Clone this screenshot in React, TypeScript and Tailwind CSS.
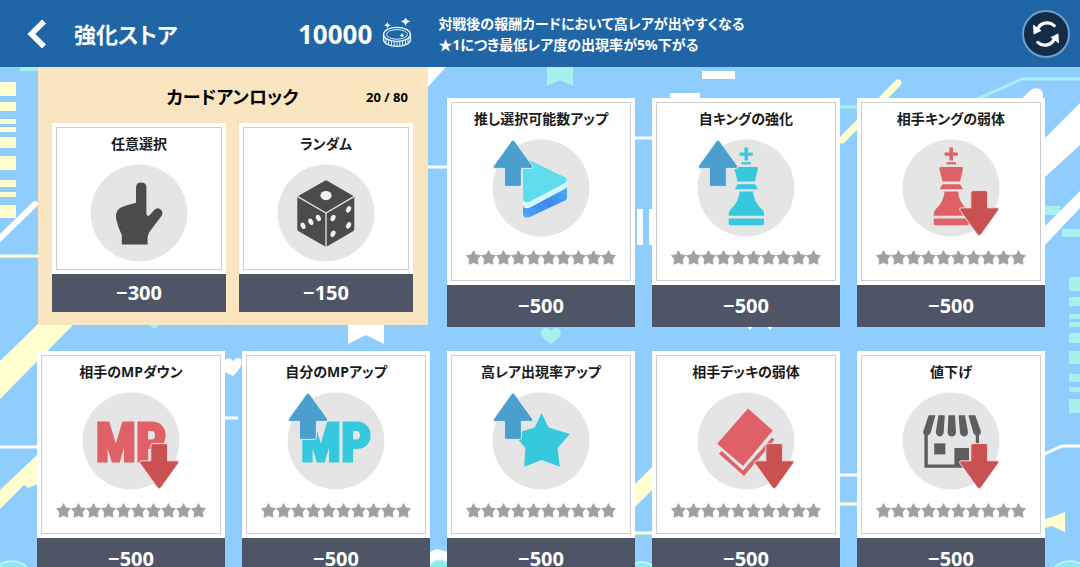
import type { ReactNode } from 'react';

const BLUE = '#36c9de';
const RED = '#df6167';

function UpArrow() {
  return (
    <path
      d="M18.4 1.2Q20 -1 21.6 1.2L39.6 26Q40.4 28.4 38 28.4H28.4V44.5Q28.4 46.4 26.4 46.4H13.4Q11.4 46.4 11.4 44.5V28.4H2Q-0.4 28.4 0.6 26Z"
      fill="#4b9fcd"
      stroke="#dcedf6"
      strokeWidth="1"
    />
  );
}

function DownArrow() {
  return (
    <path
      d="M70 50.6H82.4Q84.6 50.6 84.6 52.6V67.8H94.4Q96.8 68.2 95.2 70.4L78 94.6Q76.2 96.6 74.4 94.6L57 70.4Q55.6 68 58 67.8H67.8V52.6Q67.8 50.6 70 50.6Z"
      fill="#c95152"
      stroke="#f3dcdc"
      strokeWidth="1"
    />
  );
}

function King({ color }: { color: string }) {
  return (
    <g fill={color}>
      <path d="M46.4 7.5h3.6v5h4.8v3.2H50v4.8h-3.6v-4.8h-4.8v-3.2h4.8z" />
      <path d="M43.4 22.2h9.6v2.2h-9.6z" />
      <path d="M37.4 27H58.9Q60.4 27 60 28.6L57 41.4H39.5L36.3 28.6Q36 27 37.4 27Z" />
      <path d="M39.6 44.2H57L60 49.2H36.6Z" />
      <path d="M41.6 51.4H55Q56 62 63.6 69Q66 71.2 66 73.6V75.8H30.7V73.6Q30.7 71.2 33 69Q40.6 62 41.6 51.4Z" />
      <path d="M30.7 78.6H66V83.6Q66 85.2 64.4 85.2H32.3Q30.7 85.2 30.7 83.6Z" />
    </g>
  );
}

function MpText({ color }: { color: string }) {
  return (
    <text
      x="48"
      y="68"
      textAnchor="middle"
      fill={color}
      stroke={color}
      strokeWidth="3"
      className="font-['Impact','Roboto_Condensed','Open_Sans_Condensed','Liberation_Sans',sans-serif] text-[53px] font-bold"
    >
      MP
    </text>
  );
}

function Hand() {
  return (
    <path
      d="M45 23Q45 17.6 50.2 17.6T55.4 23V49.6Q56.4 51.6 58.6 50.2L63.4 44.8Q66.4 42 69.6 44.4Q72.4 47 70.8 50.6L58 67.6L56.6 72V79.4H30.8V70Q26 60 25 52.6Q24.6 46.6 28.4 43.6Q31 41.4 45 37.8Z"
      fill="#4b4b4b"
    />
  );
}

function Dice() {
  return (
    <g>
      <path
        d="M45.6 16.4Q48 14.8 50.4 16.4L76.3 31.4V63.4Q76.3 65.6 74.6 66.6L48 82L21 66.6Q19.3 65.6 19.3 63.4V31.4Z"
        fill="#4b4b4b"
      />
      <path d="M19.3 31.4L48 48L76.3 31.4M48 48V82" stroke="#e5e5e5" strokeWidth="1.3" fill="none" />
      <g fill="#f1f1f1">
        <ellipse cx="48" cy="30.6" rx="5.6" ry="4.6" />
        <ellipse cx="25" cy="60.8" rx="2.3" ry="3.4" transform="rotate(-25 25 60.8)" />
        <ellipse cx="32.8" cy="56.8" rx="2.3" ry="3.4" transform="rotate(-25 32.8 56.8)" />
        <ellipse cx="40.4" cy="53" rx="2.3" ry="3.4" transform="rotate(-25 40.4 53)" />
        <ellipse cx="55" cy="53" rx="2.3" ry="3.4" transform="rotate(25 55 53)" />
        <ellipse cx="70.6" cy="44.4" rx="2.3" ry="3.4" transform="rotate(25 70.6 44.4)" />
        <ellipse cx="70.6" cy="60.4" rx="2.3" ry="3.4" transform="rotate(25 70.6 60.4)" />
        <ellipse cx="55" cy="68.8" rx="2.3" ry="3.4" transform="rotate(25 55 68.8)" />
      </g>
    </g>
  );
}

function PlayTile() {
  return (
    <g>
      <defs>
        <linearGradient id="tile" x1="0" y1="1" x2="1" y2="0">
          <stop offset="0" stopColor="#4ea6f8" />
          <stop offset="0.5" stopColor="#3f86ef" />
          <stop offset="1" stopColor="#4fb4f6" />
        </linearGradient>
      </defs>
      <path d="M30 62L74 43V57.5Q74 59.6 72 60.6L38 76.6Q30 79.6 30 73.6Z" fill="url(#tile)" />
      <path d="M30 57L74 38V46Q73.8 48 72 48.8L38 67Q30 70.4 30 64Z" fill="#d6fbff" />
      <path d="M30 21Q31 17.6 35 19.6L72.4 37.6Q75.6 40 72 43L37 61.4Q30.6 64 30 58.4Z" fill="#5fdcee" />
    </g>
  );
}

function BigStar() {
  return (
    <path
      d="M48.6 20.3L55.6 34.4L76.8 41L64.6 55L66.8 73.8L48.6 67L31.2 73.8L32.4 55L20.4 41L41.6 34.4Z"
      fill={BLUE}
    />
  );
}

function Deck() {
  return (
    <g fill={RED}>
      <path d="M50 15.6L74.8 37.4L45 73L19.2 50.8Z" />
      <path d="M23.8 58L45 77.6L73.8 44.8L76.6 46.6L46 83L20.8 60.4Z" />
    </g>
  );
}

function Shop() {
  return (
    <g fill="#5e5e5e">
      <path d="M25.6 22.2H32.4L27.6 40Q25.6 43.4 22.6 42.6Q19.4 41 20.4 38Z" />
      <path d="M35.4 22.2H41.8L40.6 40Q39.6 43.4 36.6 43.4T32.8 39Z" />
      <path d="M45.4 22.2H52L53 39.4Q52.4 43.4 48.8 43.4T44.6 39.4Z" />
      <path d="M55.6 22.2H62L65 39Q64.8 43.4 61.4 43.4T57 40Z" />
      <path d="M65.4 22.2H72.2L77.8 38Q78.4 41 75.4 42.6Q72 43.4 70.4 40Z" />
      <path d="M21.4 41H24.8V71.6H72.8V41H76V74.8H21.4Z" />
      <path d="M31.2 50.4H42.4V61.4H31.2Z" />
      <path d="M51.4 55H66V72H51.4Z" />
    </g>
  );
}

function Stars({ total = 10 }: { total?: number }) {
  return (
    <div className="mt-[14px] flex justify-center">
      {Array.from({ length: total }, (_, i) => (
        <svg key={i} viewBox="0 0 15 15" className="h-[15px] w-[15px]">
          <path
            d="M7.5 0.6L9.6 4.8L14.5 5.5L11.5 9.1L12 14.2L7.5 12.6L3 14.2L3.5 9.1L0.5 5.5L5.4 4.8Z"
            fill="#a0a0a0"
            stroke="#a0a0a0"
            strokeWidth="0.8"
            strokeLinejoin="round"
          />
        </svg>
      ))}
    </div>
  );
}

type CardProps = {
  title: string;
  price: number;
  icon: ReactNode;
  rated?: boolean;
};

function StoreCard({ title, price, icon, rated = false }: CardProps) {
  return (
    <button type="button" className="block w-full cursor-pointer text-center">
      <div className="bg-white p-1">
        <div className={`border border-[#cfcfcf] pt-1.5 ${rated ? 'pb-[15px]' : 'pb-2'}`}>
          <div className="text-[14px] leading-5 font-bold text-[#1b1b1b]">{title}</div>
          <svg viewBox="0 0 96 96" className="mx-auto mt-[11px] h-24 w-24 overflow-visible" aria-hidden="true">
            <circle cx="48" cy="48" r="48.4" fill="#e5e5e5" />
            {icon}
          </svg>
          {rated && <Stars />}
        </div>
      </div>
      <div className={`bg-[#4d5566] text-[20px] font-bold text-white ${rated ? 'leading-[42px]' : 'leading-[38px]'}`}>
        −{price}
      </div>
    </button>
  );
}

const firstRow: CardProps[] = [
  { title: '推し選択可能数アップ', price: 500, icon: <><PlayTile /><UpArrow /></> },
  { title: '自キングの強化', price: 500, icon: <><King color={BLUE} /><UpArrow /></> },
  { title: '相手キングの弱体', price: 500, icon: <><King color={RED} /><DownArrow /></> },
];

const secondRow: CardProps[] = [
  { title: '相手のMPダウン', price: 500, icon: <><MpText color={RED} /><DownArrow /></> },
  { title: '自分のMPアップ', price: 500, icon: <><MpText color={BLUE} /><UpArrow /></> },
  { title: '高レア出現率アップ', price: 500, icon: <><BigStar /><UpArrow /></> },
  { title: '相手デッキの弱体', price: 500, icon: <><Deck /><DownArrow /></> },
  { title: '値下げ', price: 500, icon: <><Shop /><DownArrow /></> },
];

function CoinIcon() {
  return (
    <svg viewBox="0 0 30 32" className="h-8 w-[30px]" fill="none" stroke="#e4f6ff" aria-hidden="true">
      <ellipse cx="15" cy="16.4" rx="13.4" ry="7" strokeWidth="1.4" />
      <ellipse cx="15" cy="16.4" rx="10.4" ry="4.8" strokeWidth="0.9" />
      <path d="M1.6 16.4V21.4C1.6 25.4 7.6 28.4 15 28.4S28.4 25.4 28.4 21.4V16.4" strokeWidth="1.4" />
      <path
        d="M4 20.6V25M6.6 22.2V26.8M9.4 23V27.8M12.2 23.4V28.2M15 23.6V28.2M17.8 23.4V28.2M20.6 23V27.8M23.4 22.2V26.8M26 20.6V25"
        strokeWidth="1"
      />
      <g fill="#e4f6ff" stroke="none">
        <path d="M23.6 -1.4Q24.2 2.8 28.4 3.6Q24.2 4.4 23.6 8.6Q23 4.4 18.8 3.6Q23 2.8 23.6 -1.4Z" />
        <path d="M5.4 4Q5.8 6.8 8.6 7.2Q5.8 7.6 5.4 10.4Q5 7.6 2.2 7.2Q5 6.8 5.4 4Z" />
        <path d="M20 15Q20.4 17 22.6 17.4Q20.4 17.8 20 19.8Q19.6 17.8 17.4 17.4Q19.6 17 20 15Z" />
      </g>
    </svg>
  );
}

function Header() {
  return (
    <header className="relative flex h-[67px] shrink-0 items-center bg-[#2066a6] pr-[10px] pl-[27px] text-white">
      <button type="button" aria-label="戻る" className="mr-[27px] cursor-pointer">
        <svg viewBox="0 0 20 30" className="h-[30px] w-5">
          <path d="M17 2.6L4.4 15L17 27.4" fill="none" stroke="#fff" strokeWidth="5.6" />
        </svg>
      </button>
      <h1 className="w-[224px] text-[22px] leading-8 font-bold">強化ストア</h1>
      <div className="mr-[26px] flex items-center gap-[10px]">
        <span className="text-[26px] leading-8 font-bold">10000</span>
        <CoinIcon />
      </div>
      <p className="text-[14px] leading-[21px] font-bold">
        対戦後の報酬カードにおいて高レアが出やすくなる
        <br />
        ★1につき最低レア度の出現率が5%下がる
      </p>
      <button
        type="button"
        aria-label="更新"
        className="ml-auto flex h-12 w-12 cursor-pointer items-center justify-center rounded-full border-2 border-[#6f9fcf] bg-[#132d49]"
      >
        <svg viewBox="0 0 30 30" className="h-[30px] w-[30px]">
          <g fill="none" stroke="#fff" strokeWidth="3.2" strokeLinecap="round">
            <path d="M6.4 10.6A10.4 10.4 0 0 1 23.2 6.6" />
            <path d="M23.6 19.4A10.4 10.4 0 0 1 6.8 23.4" />
          </g>
          <path d="M2 5.6L2.6 15.4L10.6 11.8Z" fill="#fff" />
          <path d="M28 24.4L27.4 14.6L19.4 18.2Z" fill="#fff" />
        </svg>
      </button>
    </header>
  );
}

// [y, height]
const yellowBars = [[82, 14], [102, 9], [119, 5], [127, 5], [137, 11], [156, 14], [180, 7], [192, 5], [205, 13]];
const mintBars = [[277, 14], [297, 9], [314, 5], [322, 5], [333, 10], [351, 13], [374, 8], [387, 5], [399, 14]];

function Backdrop() {
  return (
    <svg
      viewBox="0 0 1080 567"
      preserveAspectRatio="xMidYMid slice"
      className="absolute inset-0 h-full w-full"
      aria-hidden="true"
    >
      <g fill="#ffffcf">
        {yellowBars.map(([y, h]) => <rect key={y} x="0" y={y} width="16" height={h} />)}
        <path d="M38 324H74L0 399V361Z" />
        <path d="M38 454V484L28 488L24 485L0 509V490Z" />
        <path d="M630 489L660 459V482L630 512Z" />
        <path d="M1045 519L1052 517L1065 512V532L1052 526L1045 528Z" />
      </g>
      <g fill="#a8f0ec">
        {mintBars.map(([y, h]) => <rect key={y} x="1069" y={y} width="11" height={h} />)}
        <path d="M20 60H38V71H20Z" />
        <path d="M547 60H573V86L560 80L547 86Z" />
        <path d="M1044 206H1060V215H1044Z" />
        <path d="M1062 229H1080V237H1062Z" />
        <path d="M551 344C536 336 541 328 546 328Q549 328 551 331Q553 328 556 328C561 328 566 336 551 344Z" />
        <path d="M147 323H162L154 329Z" />
      </g>
      <g fill="#fff">
        <path d="M428 60H452L428 87Z" />
        <path d="M702 71H735V79H702Z" />
        <path d="M670 93H700V100H670Z" />
        <path d="M1020 100L1032 89Q1043 86 1043 96V104Z" />
        <path d="M1044 139L1080 103V145L1044 178Z" />
        <path d="M1044 227L1080 191V208L1044 246Z" />
        <path d="M637 209H643V245H637ZM649 209H655V245H649Z" />
        <path d="M348 320H384V344L366 335L348 344Z" />
        <path d="M225 360Q230 356 233 361Q237 356 241 359Q244 366 233 376L225 372Z" />
        <path d="M746 325H754L750 330ZM766 325H774L770 330Z" />
        <path d="M430 552L437 549L448 552V567H430Z" />
      </g>
      <g fill="none" stroke="#fff" strokeWidth="3">
        <path d="M0 447H38" />
        <path d="M224 418H238" />
        <path d="M428 167H447" />
        <path d="M633 138H653" />
        <path d="M839 475H858" />
        <path d="M1040 456L1062 446H1080" />
        <path d="M-4 242L35 204" strokeWidth="6" strokeLinecap="round" />
      </g>
      <g fill="none" stroke="#ffffcf" strokeWidth="3">
        <path d="M0 256H38" />
        <path d="M634 533H653" />
        <path d="M839 504H858" />
        <path d="M842 140L898 83" strokeWidth="7" strokeLinecap="round" />
      </g>
      <path d="M970 102L1022 79H1080M839 107H858" fill="none" stroke="#a8f0f4" strokeWidth="3" />
      <g fill="#8feaee" stroke="#c9f7ff" strokeWidth="1.5">
        <circle cx="12" cy="583" r="22" />
        <circle cx="440" cy="574" r="14" />
        <circle cx="642" cy="578" r="16" />
        <circle cx="1070" cy="583" r="22" />
      </g>
    </svg>
  );
}

export default function App() {
  return (
    <div
      lang="ja"
      className="relative flex h-screen flex-col overflow-hidden bg-[#8fcdff] font-['Noto_Sans','Noto_Sans_CJK_JP',sans-serif] [font-feature-settings:'palt']"
    >
      <Backdrop />
      <Header />
      <main className="relative min-h-0 flex-1 overflow-y-auto pr-[35px] pl-[37px] [scrollbar-width:none]">
        <div className="grid grid-cols-5 items-start gap-x-[17px] gap-y-6">
          <section className="col-span-2 mr-0.5 ml-px bg-[#f9e6c0] pr-[15px] pb-[13px] pl-[14px]">
            <div className="grid h-14 grid-cols-[1fr_auto_1fr] items-center">
              <h2 className="col-start-2 pt-1 text-[18px] leading-6 font-bold text-black">カードアンロック</h2>
              <span className="pt-1 pr-[5px] text-right text-[13px] leading-6 font-bold text-black">20 / 80</span>
            </div>
            <div className="grid grid-cols-2 gap-[13px]">
              <StoreCard title="任意選択" price={300} icon={<Hand />} />
              <StoreCard title="ランダム" price={150} icon={<Dice />} />
            </div>
          </section>
          {firstRow.map((card) => (
            <div key={card.title} className="pt-[31px]">
              <StoreCard {...card} rated />
            </div>
          ))}
          {secondRow.map((card) => (
            <StoreCard key={card.title} {...card} rated />
          ))}
        </div>
      </main>
    </div>
  );
}
